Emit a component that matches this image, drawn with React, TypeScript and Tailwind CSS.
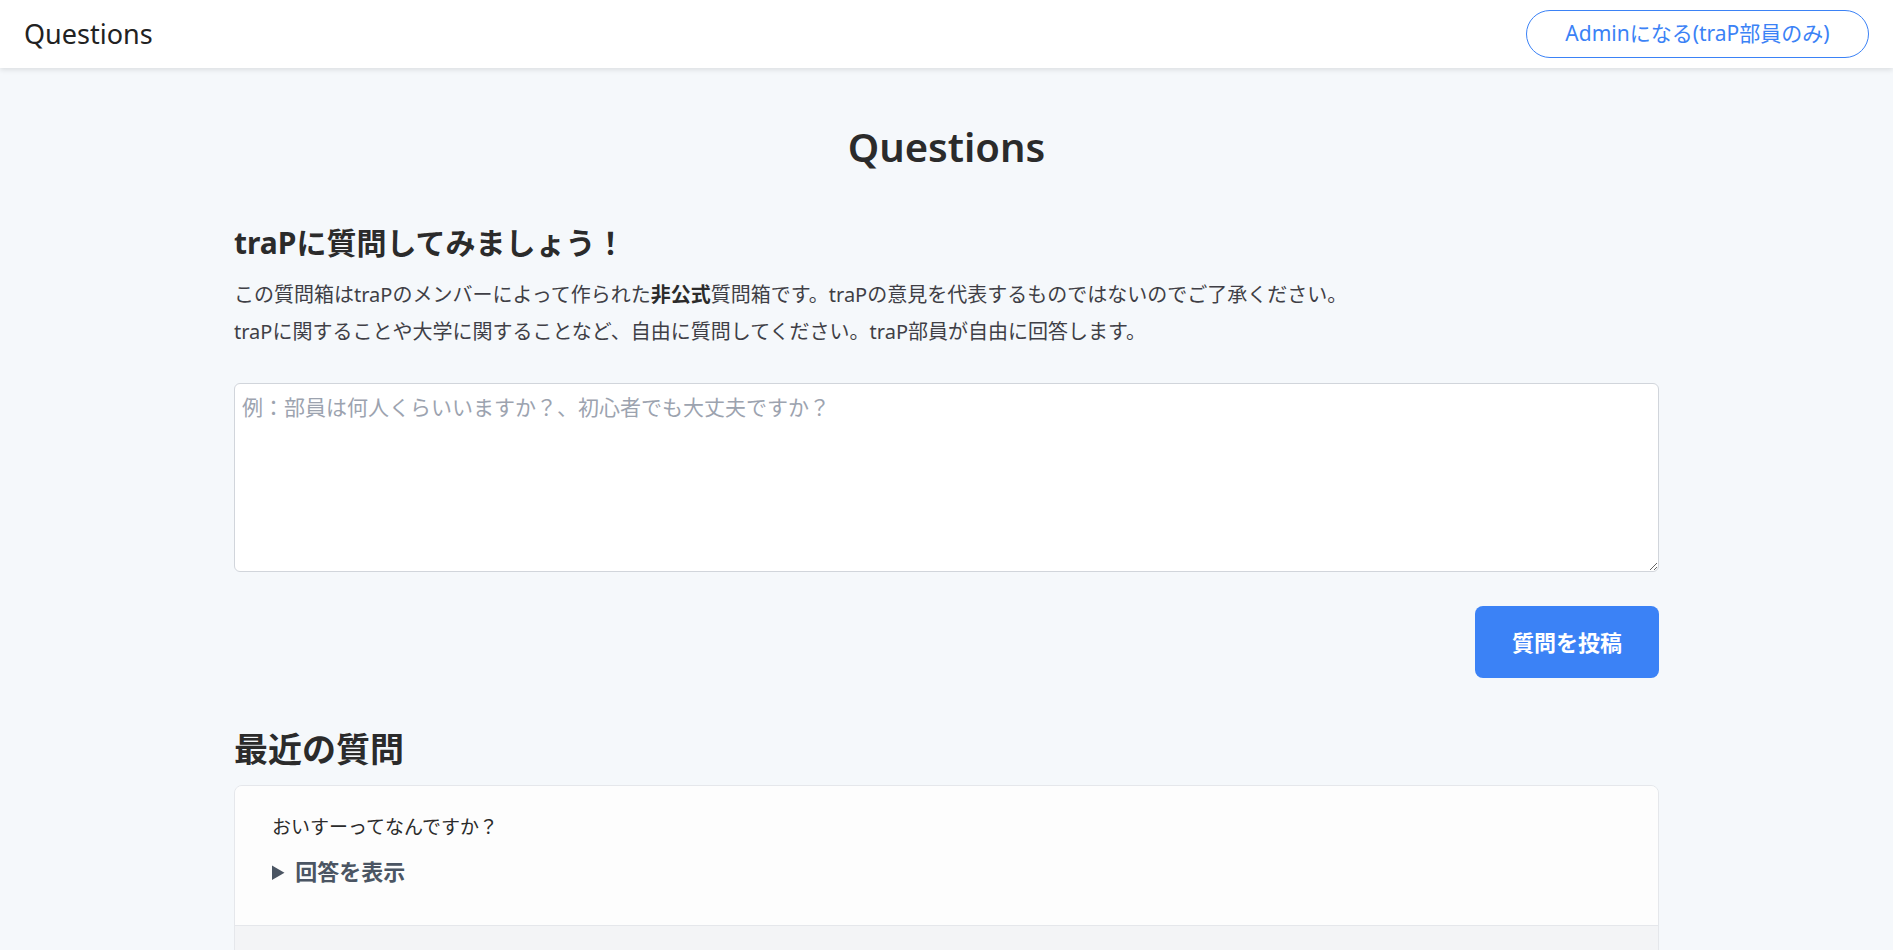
import React, { useState } from "react";

const font = "font-['Noto_Sans','Noto_Sans_CJK_JP',sans-serif]";

function QuestionCard({ text }: { text: string }) {
  return (
    <div className="rounded-lg border border-[#e5e7eb] overflow-hidden">
      <div className="bg-[#fdfdfd] px-[37px] pt-[26px] pb-[38px]">
        <p className="text-[19px] leading-[30px] text-[#2b2b2b]">{text}</p>
        <details className="mt-[13px]">
          <summary className="cursor-pointer text-[22px] leading-[32px] font-bold text-[#4b5563]">
            回答を表示
          </summary>
        </details>
      </div>
      <div className="bg-[#f3f4f6] h-[80px] border-t border-[#e5e7eb]" />
    </div>
  );
}

export default function App() {
  const [question, setQuestion] = useState("");

  return (
    <div className={`min-h-screen bg-[#f5f8fb] ${font}`}>
      {/* Header */}
      <header className="h-[68px] bg-white shadow-[0_2px_5px_rgba(0,0,0,0.1)] flex items-center justify-between pl-6 pr-6">
        <span className="text-[27px] text-[#222]">Questions</span>
        <button className="h-12 w-[343px] rounded-full border border-[#3b82f6] text-[#3b82f6] text-[21px]">
          Adminになる(traP部員のみ)
        </button>
      </header>

      <main className="w-[1425px] mx-auto">
        <h1 className="mt-[55px] text-center text-[40px] leading-[48px] font-semibold text-[#2b2b2b]">
          Questions
        </h1>

        <h2 className="mt-[54px] text-[30px] leading-[36px] font-bold text-[#2b2b2b]">
          traPに質問してみましょう！
        </h2>
        <div className="mt-[15px] text-[20px] leading-[37px] text-[#3f3f46]">
          <p>
            この質問箱はtraPのメンバーによって作られた
            <span className="font-bold text-[#2b2b2b]">非公式</span>
            質問箱です。traPの意見を代表するものではないのでご了承ください。
          </p>
          <p>
            traPに関することや大学に関することなど、自由に質問してください。traP部員が自由に回答します。
          </p>
        </div>

        <textarea
          value={question}
          onChange={(e) => setQuestion(e.target.value)}
          placeholder="例：部員は何人くらいいますか？、初心者でも大丈夫ですか？"
          className="mt-[33px] block w-full h-[189px] rounded-md border border-[#d1d5db] bg-white px-[7px] py-[8px] text-[21px] leading-[30px] text-[#2b2b2b] placeholder:text-[#9ca3af] outline-none"
        />

        <div className="mt-[34px] flex justify-end">
          <button className="h-[72px] px-[37px] rounded-lg bg-[#3b82f6] text-white text-[22px] font-bold">
            質問を投稿
          </button>
        </div>

        <h2 className="mt-[49px] text-[34px] leading-[44px] font-bold text-[#2b2b2b]">
          最近の質問
        </h2>
        <div className="mt-[14px]">
          <QuestionCard text="おいすーってなんですか？" />
        </div>
      </main>
    </div>
  );
}
